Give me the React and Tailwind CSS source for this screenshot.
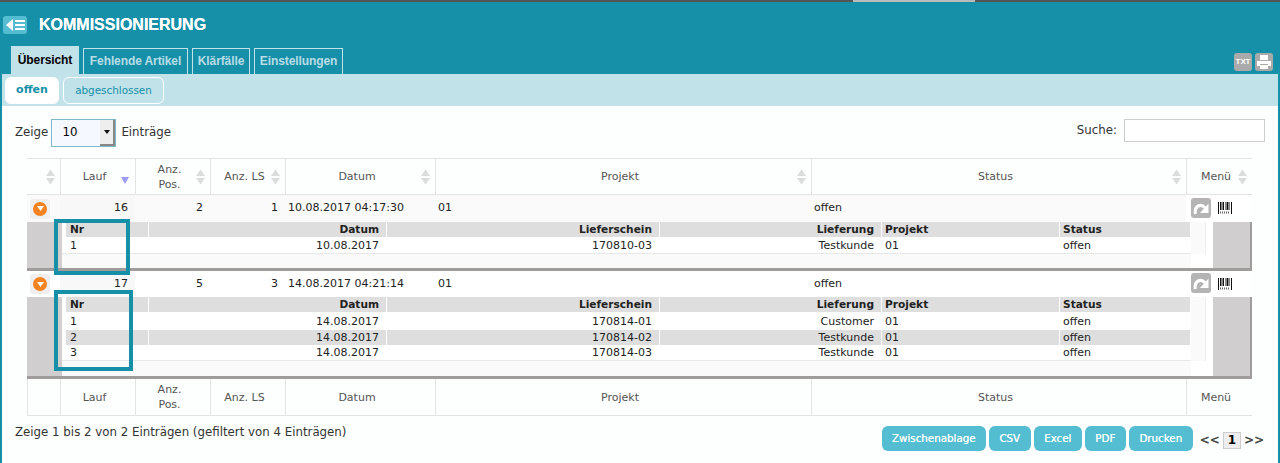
import React from "react";

const columns = "grid grid-cols-[33px_75px_75px_75px_150px_376px_375px_66px]";
const subColumns = "grid grid-cols-[82px_237px_272px_221px_177px_130px] gap-x-[1px]";

const SortArrows = () => (
  <svg width="9" height="15" viewBox="0 0 9 15" className="absolute right-[5px] top-1/2 -translate-y-1/2">
    <path d="M4.5 0 L9 6.5 H0 Z M0 8.5 H9 L4.5 15 Z" fill="#dcdcdc" />
  </svg>
);

const HeaderCell = ({ label, sort, active, border = true }) => (
  <div
    className={`relative flex items-center justify-center pr-[7px] text-center leading-[15px] ${
      border ? "border-l border-[#e4e4e4]" : ""
    }`}
  >
    <span>{label}</span>
    {sort && <SortArrows />}
    {active && (
      <svg width="8" height="7" viewBox="0 0 8 7" className="absolute right-[6px] top-[18px]">
        <path d="M0 0 H8 L4 7 Z" fill="#9c9cf4" />
      </svg>
    )}
  </div>
);

const HeaderRow = ({ sort, className = "" }) => (
  <div className={`${columns} text-[#555] ${className}`}>
    <HeaderCell sort={sort} border={false} />
    <HeaderCell label="Lauf" active={sort} />
    <HeaderCell label={<>Anz.<br />Pos.</>} sort={sort} />
    <HeaderCell label="Anz. LS" sort={sort} />
    <HeaderCell label="Datum" sort={sort} />
    <HeaderCell label="Projekt" sort={sort} />
    <HeaderCell label="Status" sort={sort} />
    <HeaderCell label="Menü" sort={sort} />
  </div>
);

const ExpandButton = () => (
  <div className="ml-[3px] flex h-[20px] w-[20px] items-center justify-center rounded-[3px] bg-[#efefef]">
    <div className="flex h-[14px] w-[14px] items-center justify-center rounded-full bg-[#f58220]">
      <svg width="7" height="5" viewBox="0 0 7 5">
        <path d="M0 0 H7 L3.5 5 Z" fill="#fff" />
      </svg>
    </div>
  </div>
);

const RefreshIcon = () => (
  <div className="-mt-[2px] flex h-[20px] w-[20px] items-center justify-center rounded-[3px] bg-[#b4b4b4]">
    <svg width="16" height="14" viewBox="0 0 16 14" fill="none">
      <path d="M2.4 13 C1 5.5 7 1.5 12.5 7" stroke="#fff" strokeWidth="3" />
      <path d="M15.5 2.5 V12 H7 Z" fill="#fff" />
    </svg>
  </div>
);

const Barcode = () => (
  <svg width="14" height="12" viewBox="0 0 14 12" className="-mt-[1px] ml-[7px]">
    <path
      d="M0.5 0 V12 M2.5 0 V8 M4 0 V8 M5.5 0 V8 M8 0 V8 M9.5 0 V8 M11 0 V8 M13.5 0 V12"
      stroke="#111"
      strokeWidth="1"
    />
    <path d="M2 10.5 H12" stroke="#666" strokeWidth="2" strokeDasharray="1 1" />
  </svg>
);

const SubCells = ({ values, rowClass, cellClass }) => (
  <div className={`${subColumns} items-stretch leading-[15px] ${rowClass}`}>
    <div className={`flex items-center pl-[4px] ${cellClass}`}>{values[0]}</div>
    <div className={`flex items-center justify-end pr-[7px] ${cellClass}`}>{values[1]}</div>
    <div className={`flex items-center justify-end pr-[7px] ${cellClass}`}>{values[2]}</div>
    <div className={`flex items-center justify-end pr-[7px] ${cellClass}`}>{values[3]}</div>
    <div className={`flex items-center pl-[3px] ${cellClass}`}>{values[4]}</div>
    <div className={`flex items-center pl-[3px] ${cellClass}`}>{values[5]}</div>
  </div>
);

const Lauf = ({ data, tone, rowHeight, detailHeight }) => (
  <>
    <div className={`${columns} items-center text-[#222] ${rowHeight} ${tone}`}>
      <ExpandButton />
      <div className="flex h-full items-center justify-end bg-[#f8f8f8] pr-[7px]">{data.lauf}</div>
      <div className="pr-[7px] text-right">{data.pos}</div>
      <div className="pr-[7px] text-right">{data.ls}</div>
      <div className="pl-[3px]">{data.datum}</div>
      <div className="pl-[3px]">01</div>
      <div className="pl-[3px]">offen</div>
      <div className="flex h-full items-center bg-white pl-[5px]">
        <RefreshIcon />
        <Barcode />
      </div>
    </div>
    <div className={`flex border-b-[3px] border-r-2 border-[#a09c9c] text-[#222] ${detailHeight}`}>
      <div className="w-[35px] shrink-0 bg-[#d0cece]" />
      <div className="flex w-[1151px] shrink-0 flex-col bg-white">
        <div className="flex">
          <div className="w-[1129px] shrink-0 border-b border-[#e8e8e8] pl-[4px]">
            <SubCells
              values={["Nr", "Datum", "Lieferschein", "Lieferung", "Projekt", "Status"]}
              rowClass="h-[15px] text-[10.6px] font-bold"
              cellClass="bg-[#dedede]"
            />
            {data.rows.map((row, i) => (
              <SubCells
                key={row.nr}
                values={[row.nr, row.datum, row.schein, row.lieferung, "01", "offen"]}
                rowClass={i % 2 === 1 ? "h-[15px] pt-[1px]" : i === data.rows.length - 1 ? "h-[16px]" : "h-[17px] pt-[1px]"}
                cellClass={i % 2 === 1 ? "bg-[#dedede]" : ""}
              />
            ))}
          </div>
          <div className="w-[15px] border-r border-[#eeeeee] bg-[#fafafa]" />
        </div>
        <div className="w-[1129px] grow bg-[#fafafa]" />
      </div>
      <div className="grow bg-[#d0cece]" />
    </div>
  </>
);

const first = {
  lauf: 16, pos: 2, ls: 1, datum: "10.08.2017 04:17:30",
  rows: [{ nr: 1, datum: "10.08.2017", schein: "170810-03", lieferung: "Testkunde" }],
};
const second = {
  lauf: 17, pos: 5, ls: 3, datum: "14.08.2017 04:21:14",
  rows: [
    { nr: 1, datum: "14.08.2017", schein: "170814-01", lieferung: "Customer" },
    { nr: 2, datum: "14.08.2017", schein: "170814-02", lieferung: "Testkunde" },
    { nr: 3, datum: "14.08.2017", schein: "170814-03", lieferung: "Testkunde" },
  ],
};

export default function App() {
  const tabClass = "flex h-[26px] items-center justify-center border border-b-0 border-[#c2e2ea] pb-[1px] text-[#b8dde6]";
  const exportClass =
    "flex h-[25px] items-center justify-center rounded-[6px] bg-[#55bdd2] text-[10.3px] text-white [text-shadow:0_0_0.6px_white]";

  return (
    <div className="relative h-[463px] w-[1280px] overflow-hidden bg-[#1590a8] font-['DejaVu_Sans',sans-serif] text-[11px] text-[#333]">
      <div className="flex h-[2px]">
        <div className="w-[853px] bg-[#555]" />
        <div className="w-[122px] bg-[#bbbbbb]" />
        <div className="grow bg-[#555]" />
      </div>

      <div className="flex h-[44px] items-center pl-[3px] pt-[1px] font-['Liberation_Sans',sans-serif]">
        <div className="flex h-[18px] w-[24px] items-center justify-center rounded-[3px] bg-[#55bdd2]">
          <svg width="19" height="12" viewBox="0 0 19 12">
            <path d="M0 6 L7 0 V12 Z" fill="#fff" />
            <path d="M9 2 H19 M9 6 H19 M9 10 H19" stroke="#fff" strokeWidth="2" />
          </svg>
        </div>
        <h1 className="ml-[12px] text-[16px] font-bold text-white [text-shadow:0_0_0.6px_white]">KOMMISSIONIERUNG</h1>
      </div>

      <div className="flex h-[28px] items-end justify-between pl-[11px] pr-[7px] font-['Liberation_Sans',sans-serif] text-[12px] font-bold tracking-[-0.1px]">
        <div className="flex items-end gap-[4px]">
          <div className="flex h-[28px] w-[68px] items-center justify-center bg-[#c2e2ea] text-black">Übersicht</div>
          <div className={`${tabClass} w-[105px]`}>Fehlende Artikel</div>
          <div className={`${tabClass} w-[58px]`}>Klärfälle</div>
          <div className={`${tabClass} w-[89px]`}>Einstellungen</div>
        </div>
        <div className="mb-[3px] flex gap-[3px]">
          <div className="flex h-[18px] w-[18px] items-center justify-center rounded-[3px] bg-[#aaaaaa] text-[8px] text-white">TXT</div>
          <div className="flex h-[18px] w-[18px] items-center justify-center rounded-[3px] bg-[#aaaaaa]">
            <svg width="14" height="14" viewBox="0 0 14 14">
              <path d="M3 0 H11 V5 H3 Z M0 6 H14 V11 H11 V9 H3 V11 H0 Z M3 10 H11 V14 H3 Z" fill="#fff" />
            </svg>
          </div>
        </div>
      </div>

      <div className="mx-[2px] flex h-[32px] items-start gap-[4px] bg-[#c2e2ea] pl-[3px] pt-[3px]">
        <div className="flex h-[27px] w-[54px] items-center justify-center rounded-[6px] bg-white font-bold text-[#1590a8]">offen</div>
        <div className="flex h-[27px] w-[101px] items-center justify-center rounded-[6px] border border-white text-[10.4px] text-[#1590a8]">abgeschlossen</div>
      </div>

      <div className="relative mx-[2px] h-[357px] bg-[#fdfefe] pl-[25px] pr-[26px]">
        <div className="flex h-[52px] items-start justify-between pt-[13px] text-[11.8px]">
          <div className="-ml-[12px] flex items-center gap-[3px]">
            <span>Zeige</span>
            <div className="flex h-[28px] w-[65px] items-center justify-between border border-[#7fb9c8] bg-[#f5f8ff] text-black">
              <span className="pl-[10px]">10</span>
              <div className="flex h-full w-[15px] items-center justify-center border-b-2 border-r-2 border-[#888] bg-[#eeeeee]">
                <svg width="6" height="4" viewBox="0 0 6 4"><path d="M0 0 H6 L3 4 Z" fill="#111" /></svg>
              </div>
            </div>
            <span className="ml-[2px]">Einträge</span>
          </div>
          <div className="-mr-[13px] flex items-center gap-[7px]">
            <span>Suche:</span>
            <input className="h-[23px] w-[141px] border border-[#cccccc] bg-white" readOnly />
          </div>
        </div>

        <div className="w-[1225px] border-t border-[#e4e4e4]">
          <HeaderRow sort className="h-[35px]" />
          <div className="border-t border-[#e4e4e4]" />
          <Lauf data={first} tone="bg-[#fafafa]" rowHeight="h-[27px]" detailHeight="h-[49px]" />
          <Lauf data={second} tone="bg-white" rowHeight="h-[26px]" detailHeight="h-[82px]" />
          <HeaderRow className="h-[37px] border-b border-[#e4e4e4] shadow-[inset_1px_0_0_#e4e4e4]" />
        </div>

        <div className="flex items-start justify-between">
          <div className="-ml-[12px] pt-[8px] text-[11.8px]">Zeige 1 bis 2 von 2 Einträgen (gefiltert von 4 Einträgen)</div>
          <div className="-mr-[12px] flex items-center gap-[3px] pt-[10px]">
            <div className={`${exportClass} w-[104px]`}>Zwischenablage</div>
            <div className={`${exportClass} w-[42px]`}>CSV</div>
            <div className={`${exportClass} w-[48px]`}>Excel</div>
            <div className={`${exportClass} w-[41px]`}>PDF</div>
            <div className={`${exportClass} w-[64px]`}>Drucken</div>
            <div className="ml-[4px] flex items-center gap-[3px] pt-[3px] text-[12px] font-bold text-[#444]">
              <span>&lt;&lt;</span>
              <span className="flex h-[17px] w-[18px] items-center justify-center border border-[#cccccc] bg-[#eeeeee] text-black">1</span>
              <span>&gt;&gt;</span>
            </div>
          </div>
        </div>

        <div className="absolute left-[52px] top-[113px] h-[56px] w-[76px] border-[4px] border-[#1590a8]" />
        <div className="absolute left-[52px] top-[184px] h-[81px] w-[79px] border-[4px] border-[#1590a8]" />
      </div>
    </div>
  );
}
